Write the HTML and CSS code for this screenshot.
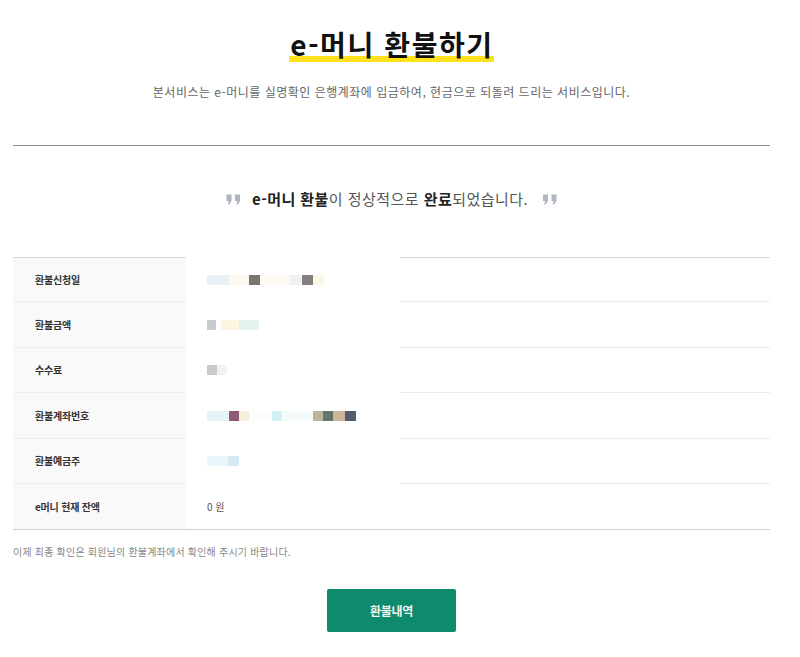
FILE: index.html
```html
<!DOCTYPE html>
<html lang="ko">
<head>
<meta charset="utf-8">
<title>e-머니 환불하기</title>
<link rel="stylesheet" href="styles.css">
</head>
<body>
<main class="page">
  <h1 class="title"><span class="title-mark">e-머니 환불하기</span></h1>
  <p class="subtitle">본서비스는 e-머니를 실명확인 은행계좌에 입금하여, 현금으로 되돌려 드리는 서비스입니다.</p>
  <hr class="rule">
  <div class="message">
    <svg class="quote" width="15" height="11" viewBox="0 0 15 11" aria-hidden="true">
      <path d="M0.5 0.5 H5.5 V7 L3.5 10.5 H2 L2.6 7 H0.5 Z" fill="#aeb7c1"/>
      <path d="M9 0.5 H14 V7 L12 10.5 H10.5 L11.1 7 H9 Z" fill="#aeb7c1"/>
    </svg>
    <p class="message-text"><b>e-머니 환불</b>이 정상적으로 <b>완료</b>되었습니다.</p>
    <svg class="quote" width="15" height="11" viewBox="0 0 15 11" aria-hidden="true">
      <path d="M1 0.5 H6 V7 L3.5 10.5 H2.2 L3 7 H1 Z" fill="#aeb7c1"/>
      <path d="M9.5 0.5 H14.5 V7 L12 10.5 H10.7 L11.5 7 H9.5 Z" fill="#aeb7c1"/>
    </svg>
  </div>
  <div class="info">
    <div class="row first">
      <div class="label">환불신청일</div>
      <div class="value"><span class="mosaic m1"></span></div>
    </div>
    <div class="row">
      <div class="label">환불금액</div>
      <div class="value"><span class="mosaic m2"></span></div>
    </div>
    <div class="row">
      <div class="label">수수료</div>
      <div class="value"><span class="mosaic m3"></span></div>
    </div>
    <div class="row">
      <div class="label">환불계좌번호</div>
      <div class="value"><span class="mosaic m4"></span></div>
    </div>
    <div class="row">
      <div class="label">환불예금주</div>
      <div class="value"><span class="mosaic m5"></span></div>
    </div>
    <div class="row last">
      <div class="label">e머니 현재 잔액</div>
      <div class="value full">0 원</div>
    </div>
  </div>
  <p class="note">이제 최종 확인은 회원님의 환불계좌에서 확인해 주시기 바랍니다.</p>
  <div class="actions">
    <button class="btn" type="button">환불내역</button>
  </div>
</main>
</body>
</html>
```

FILE: styles.css
```css
* {
  box-sizing: border-box;
}

html, body {
  margin: 0;
  padding: 0;
  background: #ffffff;
}

body {
  font-family: "Noto Sans CJK KR", "Noto Sans", sans-serif;
  color: #333;
}

.page {
  width: 757px;
  margin-left: 13px;
  display: flex;
  flex-direction: column;
}

.title {
  margin: 29px 0 0;
  text-align: center;
  font-size: 28px;
  line-height: 30px;
  font-weight: 700;
  color: #111;
  letter-spacing: 1.6px;
}

.title-mark {
  display: inline-block;
  padding: 0 0 3px 1px;
  background-image: linear-gradient(#ffe21c, #ffe21c);
  background-repeat: no-repeat;
  background-size: 100% 6px;
  background-position: 0 100%;
}

.subtitle {
  margin: 21px 0 0;
  text-align: center;
  font-size: 12px;
  line-height: 18px;
  color: #666;
  letter-spacing: 0.5px;
}

.rule {
  margin: 44px 0 0;
  border: 0;
  height: 1px;
  background: #8c8c8c;
}

.message {
  margin-top: 43px;
  display: flex;
  justify-content: center;
  align-items: center;
  gap: 11px;
}

.message .quote:last-child {
  margin-left: 3px;
}

.message-text {
  margin: 0;
  font-size: 15px;
  line-height: 20px;
  color: #555;
  letter-spacing: 0.45px;
}

.message-text b {
  color: #222;
  font-weight: 700;
}

.info {
  margin-top: 48px;
  border-bottom: 1px solid #cfcfcf;
}

.row {
  display: grid;
  grid-template-columns: 173px 1fr;
  height: 45.4px;
}

.label {
  background: #f9f9f9;
  border-bottom: 1px solid #eeeeee;
  padding-left: 22px;
  display: flex;
  align-items: center;
  font-size: 10px;
  font-weight: 700;
  color: #333;
  letter-spacing: -0.2px;
}

.row.first .label {
  border-top: 1px solid #d8d8d8;
}

.row.last .label {
  border-bottom: 0;
}

.value {
  padding-left: 21px;
  display: flex;
  align-items: center;
  font-size: 10px;
  color: #555;
  background-image: linear-gradient(#ececec, #ececec);
  background-repeat: no-repeat;
  background-size: calc(100% - 214px) 1px;
  background-position: 100% 100%;
}

.row.first .value {
  background-image: linear-gradient(#d8d8d8, #d8d8d8), linear-gradient(#ececec, #ececec);
  background-size: calc(100% - 214px) 1px, calc(100% - 214px) 1px;
  background-position: 100% 0, 100% 100%;
}

.value.full {
  background: none;
}

.mosaic {
  display: block;
  height: 10px;
}

.m1 {
  width: 117px;
  background: linear-gradient(to right,
    #e9eff3 0 22px, #fbf9ef 22px 42px, #7b736e 42px 53px,
    #fdfaf1 53px 83px, #f1f1f1 83px 95px, #858080 95px 106px, #fcf8e6 106px 117px);
}

.m2 {
  width: 52px;
  background: linear-gradient(to right,
    #c9cace 0 9px, #ffffff 9px 14px, #fbf5e1 14px 32px, #e3f2ee 32px 52px);
}

.m3 {
  width: 20px;
  background: linear-gradient(to right, #c9c9c9 0 10px, #f2f2f2 10px 20px);
}

.m4 {
  width: 149px;
  background: linear-gradient(to right,
    #e6f4f8 0 22px, #8e5a77 22px 32px, #f6eedc 32px 42px, #fbfdfe 42px 65px,
    #d2f2f8 65px 75px, #f7fafb 75px 106px, #bdb398 106px 116px, #62796a 116px 126px,
    #cfb59c 126px 138px, #4f5d6b 138px 149px);
}

.m5 {
  width: 32px;
  background: linear-gradient(to right, #ebf6fa 0 21px, #d7eaf4 21px 32px);
}

.note {
  margin: 15px 0 0;
  font-size: 10px;
  line-height: 14px;
  color: #888;
  letter-spacing: 0.2px;
}

.actions {
  margin-top: 30px;
  display: flex;
  justify-content: center;
}

.btn {
  width: 129px;
  height: 43px;
  border: 0;
  border-radius: 2px;
  background: #0e8a6d;
  color: #f4f4f4;
  font-family: inherit;
  font-size: 12px;
  font-weight: 700;
  letter-spacing: -0.3px;
  cursor: pointer;
}
```
